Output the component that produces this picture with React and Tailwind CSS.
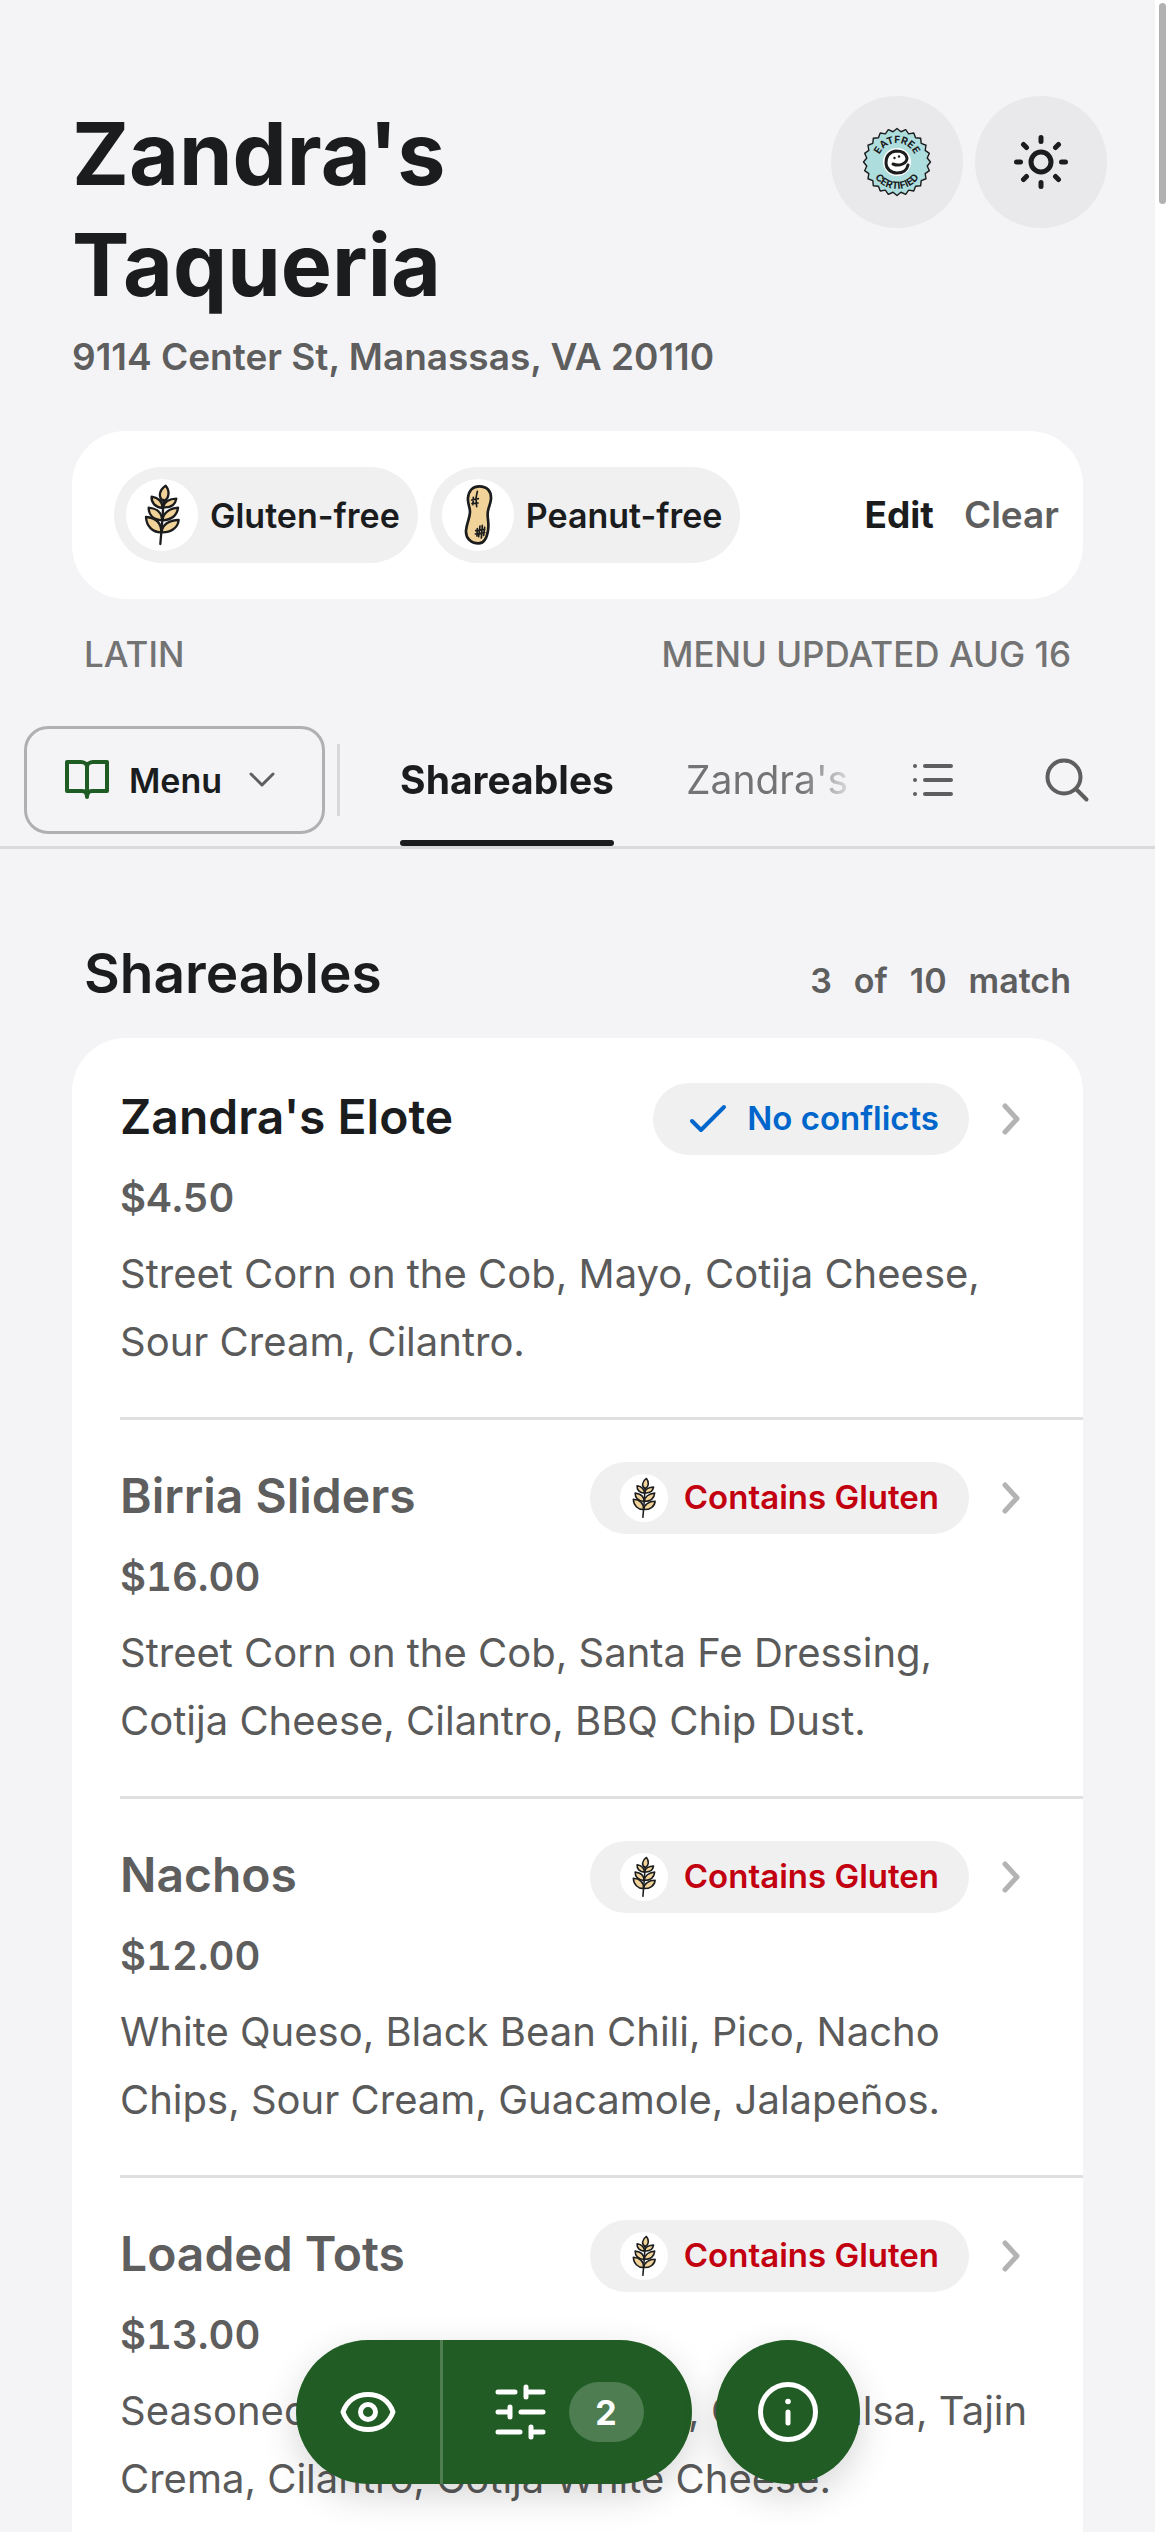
import React, { useState } from 'react';

const filters = [
    { id: 'gluten', label: 'Gluten-free', Icon: WheatIcon },
    { id: 'peanut', label: 'Peanut-free', Icon: PeanutIcon },
];

const tabs = ['Shareables', "Zandra's"];

const items = [
    {
        name: "Zandra's Elote",
        price: '$4.50',
        description: 'Street Corn on the Cob, Mayo, Cotija Cheese, Sour Cream, Cilantro.',
        conflict: null,
    },
    {
        name: 'Birria Sliders',
        price: '$16.00',
        description: 'Street Corn on the Cob, Santa Fe Dressing, Cotija Cheese, Cilantro, BBQ Chip Dust.',
        conflict: 'Contains Gluten',
    },
    {
        name: 'Nachos',
        price: '$12.00',
        description: 'White Queso, Black Bean Chili, Pico, Nacho Chips, Sour Cream, Guacamole, Jalapeños.',
        conflict: 'Contains Gluten',
    },
    {
        name: 'Loaded Tots',
        price: '$13.00',
        description: 'Seasoned Tater Tots, Carnitas, Corn Salsa, Tajin Crema, Cilantro, Cotija White Cheese.',
        conflict: 'Contains Gluten',
    },
];

// --- Icons ---
function WheatIcon({ className }) {
    return (
        <svg viewBox="18 27 216 216" className={className} fill="#f1d299" stroke="#1b1c1e" strokeWidth="7" strokeLinecap="round" strokeLinejoin="round" aria-hidden="true">
            <path d="M132 94C112 82 118 60 137 47C150 62 148 84 132 94Z" />
            <path d="M128 114C106 112 93 98 95 80C113 83 127 94 128 114Z" />
            <path d="M129 112C131 96 148 86 169 86C166 104 152 114 129 112Z" />
            <path d="M126 151C100 149 86 134 86 113C110 115 126 128 126 151Z" />
            <path d="M128 151C128 130 148 115 174 113C172 136 154 150 128 151Z" />
            <path d="M124 187C98 188 79 168 78 141C106 143 124 158 124 187Z" />
            <path d="M125 187C126 164 148 150 176 150C174 174 152 188 125 187Z" />
            <path d="M131 90L127 150L121 222" fill="none" />
        </svg>
    );
}

function PeanutIcon({ className }) {
    return (
        <svg viewBox="18 27 216 216" className={className} fill="#f1d299" stroke="#1b1c1e" strokeLinecap="round" strokeLinejoin="round" aria-hidden="true">
            <path strokeWidth="8" d="M130 49C152 49 166 62 165 86C164 104 156 112 155 130C154 148 160 158 156 182C152 206 144 220 128 220C104 220 89 204 90 182C92 158 102 144 102 126C102 110 94 100 96 84C98 60 112 49 130 49Z" />
            <g fill="none" strokeWidth="5">
                <path d="M124 64L120 84L122 110M112 82L111 104M107 90L127 86M108 101L126 99" />
                <path d="M132 168L128 200M139 166L136 204M146 172L143 196M119 182L146 178M118 192L146 188M124 176L123 198" />
            </g>
        </svg>
    );
}

const sealPoints = Array.from({ length: 48 }, (_, i) => {
    const r = i % 2 ? 30.5 : 33.5;
    const a = (i * Math.PI) / 24;
    return `${(36 + r * Math.sin(a)).toFixed(2)},${(36 - r * Math.cos(a)).toFixed(2)}`;
}).join(' ');

function CertifiedSeal() {
    return (
        <svg viewBox="0 0 72 72" className="size-18" aria-hidden="true">
            <polygon points={sealPoints} fill="#aedddd" stroke="#1b1c1e" strokeWidth="1.4" strokeLinejoin="round" />
            <path id="seal-top" d="M17 36A19 19 0 0 1 55 36" fill="none" />
            <path id="seal-bottom" d="M9 36A27 27 0 0 0 63 36" fill="none" />
            <g fill="#1b1c1e" fontFamily="Inter, sans-serif" fontSize="10" fontWeight="700" textAnchor="middle">
                <text><textPath href="#seal-top" startOffset="50%">EATFREE</textPath></text>
                <text><textPath href="#seal-bottom" startOffset="50%">CERTIFIED</textPath></text>
            </g>
            <circle cx="36" cy="36" r="14" fill="#fff" />
            <path d="M32 38C39 41 46 37 46 32C45 27 40 25 35 25C28 26 25 31 25 37C25 43 30 47 36 47C42 47 46 44 47 39" fill="none" stroke="#1b1c1e" strokeWidth="3" strokeLinecap="round" />
            <circle cx="33.5" cy="32" r="1.2" fill="#1b1c1e" />
            <circle cx="38" cy="30.5" r="1.2" fill="#1b1c1e" />
        </svg>
    );
}

function SunIcon() {
    return (
        <svg viewBox="0 0 72 72" className="size-18" fill="none" stroke="#1b1c1e" strokeWidth="5" strokeLinecap="round" aria-hidden="true">
            <circle cx="36" cy="36" r="10" />
            <path d="M36 11.500V15.500M36 56.500V60.500M11.500 36H15.500M56.500 36H60.500M18.500 18.500L21.500 21.500M50.500 50.500L53.500 53.500M18.500 53.500L21.500 50.500M50.500 21.500L53.500 18.500" />
        </svg>
    );
}

function BookIcon() {
    return (
        <svg viewBox="0 0 48 48" className="size-12" fill="none" stroke="#1f5c23" strokeWidth="4" strokeLinejoin="round" strokeLinecap="round" aria-hidden="true">
            <path d="M24 11C24 8 21 6 18 6H4V35H19C22 35 24 37 24 41C24 37 26 35 29 35H44V6H30C27 6 24 8 24 11V41" />
        </svg>
    );
}

function ListIcon() {
    return (
        <svg viewBox="0 0 48 48" className="size-12" fill="none" stroke="#5e5e5e" strokeWidth="4" strokeLinecap="round" aria-hidden="true">
            <path d="M16 10H42M16 24H42M16 38H42M6 10H6.010M6 24H6.010M6 38H6.010" />
        </svg>
    );
}

function SearchIcon() {
    return (
        <svg viewBox="0 0 48 48" className="size-12" fill="none" stroke="#5e5e5e" strokeWidth="4" strokeLinecap="round" aria-hidden="true">
            <circle cx="21" cy="21" r="16.500" />
            <path d="M33 33L43.500 43.500" />
        </svg>
    );
}

function Chevron({ className, d, width }) {
    return (
        <svg viewBox="0 0 48 48" className={className} fill="none" stroke="currentColor" strokeWidth={width} strokeLinecap="round" strokeLinejoin="round" aria-hidden="true">
            <path d={d} />
        </svg>
    );
}

function EyeIcon() {
    return (
        <svg viewBox="0 0 60 60" className="size-15" fill="none" stroke="#fff" strokeWidth="5" strokeLinejoin="round" aria-hidden="true">
            <path d="M5 30C9 19 18 12.500 30 12.500S51 19 55 30C51 41 42 47.500 30 47.500S9 41 5 30Z" />
            <circle cx="30" cy="30" r="7.500" />
        </svg>
    );
}

function SlidersIcon() {
    return (
        <svg viewBox="0 0 60 60" className="size-15" fill="none" stroke="#fff" strokeWidth="5" strokeLinecap="round" aria-hidden="true">
            <path d="M7 10H24M35 5V15M35 10H52M7 30H19M19 25V35M30 30H52M7 50H29M40 45V55M40 50H52" />
        </svg>
    );
}

function InfoIcon() {
    return (
        <svg viewBox="0 0 60 60" className="size-15" fill="none" stroke="#fff" strokeWidth="5" strokeLinecap="round" aria-hidden="true">
            <circle cx="30" cy="30" r="27.500" />
            <path d="M30 30V41" />
            <circle cx="30" cy="19.500" r="2.800" fill="#fff" stroke="none" />
        </svg>
    );
}

function MenuItem({ item }) {
    return (
        <li className="ml-12 border-b-3 border-[#e0e0e2] pt-[42px] pr-12 pb-[41px] last:border-b-0">
            <div className="flex items-start justify-between">
                <h3 className={`text-[48px] leading-[68px] font-semibold ${item.conflict ? 'text-[#5e5e5e]' : 'text-[#1b1c1e]'}`}>{item.name}</h3>
                <div className="flex items-center gap-[18px]">
                    <span className={`flex h-18 items-center gap-4 rounded-full bg-[#f0f0f0] px-[30px] text-[33px] font-semibold ${item.conflict ? 'text-[#c20010]' : 'text-[#0066cc]'}`}>
                        {item.conflict ? (
                            <WheatIcon className="size-12 rounded-full bg-white" />
                        ) : (
                            <Chevron className="size-12" d="M9 26L18 35L41 12" width="4" />
                        )}
                        {item.conflict || 'No conflicts'}
                    </span>
                    <button aria-label={`Open ${item.name}`} className="text-[#b3b3b3]">
                        <Chevron className="size-12" d="M18 11L30 24L18 37" width="5" />
                    </button>
                </div>
            </div>
            <p className="mt-[14px] text-[40px] leading-[58px] font-semibold text-[#5e5e5e] tabular-nums">{item.price}</p>
            <p className="mt-[13px] text-[40px] leading-[68px] text-[#5a5a5a]">{item.description}</p>
        </li>
    );
}

function App() {
    const [activeTab, setActiveTab] = useState('Shareables');

    return (
        <div className="flex h-screen overflow-hidden bg-white font-['Inter',sans-serif] text-[#1b1c1e]">
            <main className="min-w-0 flex-1 bg-[#f4f4f7]">
                {/* Restaurant header */}
                <header className="flex items-start gap-12 pt-24 pr-12 pl-18">
                    <div className="flex-1 pt-[3px]">
                        <h1 className="text-[86px] leading-[111px] font-bold">Zandra's Taqueria</h1>
                    </div>
                    <div className="flex gap-3">
                        <button aria-label="EatFree certified" className="flex size-33 items-center justify-center rounded-full bg-[#e9e9eb]">
                            <CertifiedSeal />
                        </button>
                        <button aria-label="Toggle theme" className="flex size-33 items-center justify-center rounded-full bg-[#e9e9eb]">
                            <SunIcon />
                        </button>
                    </div>
                </header>
                <p className="mt-2 px-18 text-[37px] leading-[56px] font-semibold text-[#5e5e5e]">9114 Center St, Manassas, VA 20110</p>

                {/* Active filters */}
                <section className="mx-18 mt-[46px] flex items-center justify-between rounded-[54px] bg-white py-9 pr-6 pl-[42px]">
                    <div className="flex gap-3">
                        {filters.map(({ id, label, Icon }) => (
                            <span key={id} className="flex h-24 items-center gap-3 rounded-full bg-[#f0f0f0] pr-[18px] pl-3 text-[34px] font-semibold">
                                <Icon className="size-18 rounded-full bg-white" />
                                {label}
                            </span>
                        ))}
                    </div>
                    <div className="flex gap-[30px] text-[37px]">
                        <button className="font-bold">Edit</button>
                        <button className="font-semibold text-[#5e5e5e]">Clear</button>
                    </div>
                </section>
                <div className="mt-[30px] flex justify-between px-21 text-[35px] leading-[50px] font-medium text-[#737373]">
                    <span>LATIN</span>
                    <span>MENU UPDATED AUG 16</span>
                </div>

                {/* Category navigation */}
                <nav className="mt-[47px] flex items-start border-b-3 border-[#dadadc] pr-10 pl-6">
                    <button className="flex h-27 items-center rounded-3xl border-3 border-[#b0b0b0] px-9 text-[34px] font-semibold">
                        <BookIcon />
                        <span className="ml-[18px]">Menu</span>
                        <Chevron className="ml-4 size-12 text-[#5e5e5e]" d="M13 18L24 29L35 18" width="3" />
                    </button>
                    <div className="mt-[18px] ml-3 h-18 w-[3px] bg-[#d8d8da]" />
                    <div className="ml-15 flex h-30 min-w-0 flex-1 gap-18 overflow-hidden mask-r-from-[calc(100%-60px)] mask-r-to-100%">
                        {tabs.map((tab) => (
                            <button key={tab} onClick={() => setActiveTab(tab)} className="flex flex-col text-[39px] whitespace-nowrap">
                                <span className={`flex h-[114px] items-center pb-[6px] ${activeTab === tab ? 'font-bold' : 'text-[#737373]'}`}>{tab}</span>
                                {activeTab === tab && <span className="h-[6px] w-full rounded-full bg-[#1b1c1e]" />}
                            </button>
                        ))}
                    </div>
                    <button aria-label="All categories" className="ml-6 flex h-27 w-24 items-center justify-center">
                        <ListIcon />
                    </button>
                    <button aria-label="Search" className="ml-[38px] flex h-27 w-24 items-center justify-center">
                        <SearchIcon />
                    </button>
                </nav>

                {/* Menu section */}
                <section className="px-18 pt-[91px]">
                    <div className="flex items-baseline justify-between px-3">
                        <h2 className="text-[55px] leading-[66px] font-semibold">Shareables</h2>
                        <p className="flex gap-[22px] text-[34px] font-semibold text-[#5e5e5e]">
                            <span>3</span>
                            <span>of</span>
                            <span>10</span>
                            <span>match</span>
                        </p>
                    </div>
                    <ul className="mt-8 rounded-t-[54px] bg-white pt-[3px] pb-12">
                        {items.map((item) => (
                            <MenuItem key={item.name} item={item} />
                        ))}
                    </ul>
                </section>

                {/* Floating actions */}
                <div className="fixed inset-x-0 bottom-12 mr-[15px] flex justify-center gap-6">
                    <div className="flex h-36 overflow-hidden rounded-full bg-[#205c24] shadow-[0_12px_36px_rgba(0,0,0,0.16)]">
                        <button aria-label="View options" className="flex w-36 items-center justify-center">
                            <EyeIcon />
                        </button>
                        <button aria-label="Filters" className="flex items-center gap-[18px] border-l-3 border-[#4f7e51] px-12">
                            <SlidersIcon />
                            <span className="flex h-15 w-[75px] items-center justify-center rounded-full bg-[#4d7d50] text-[34px] font-bold text-white">2</span>
                        </button>
                    </div>
                    <button aria-label="Information" className="flex size-36 items-center justify-center rounded-full bg-[#205c24] shadow-[0_12px_36px_rgba(0,0,0,0.16)]">
                        <InfoIcon />
                    </button>
                </div>
            </main>

            {/* Scroll track */}
            <div className="w-[15px] bg-white px-1 pt-[3px]">
                <div className="h-[201px] rounded-full bg-[#b2b2b2]" />
            </div>
        </div>
    );
}

export default App;
